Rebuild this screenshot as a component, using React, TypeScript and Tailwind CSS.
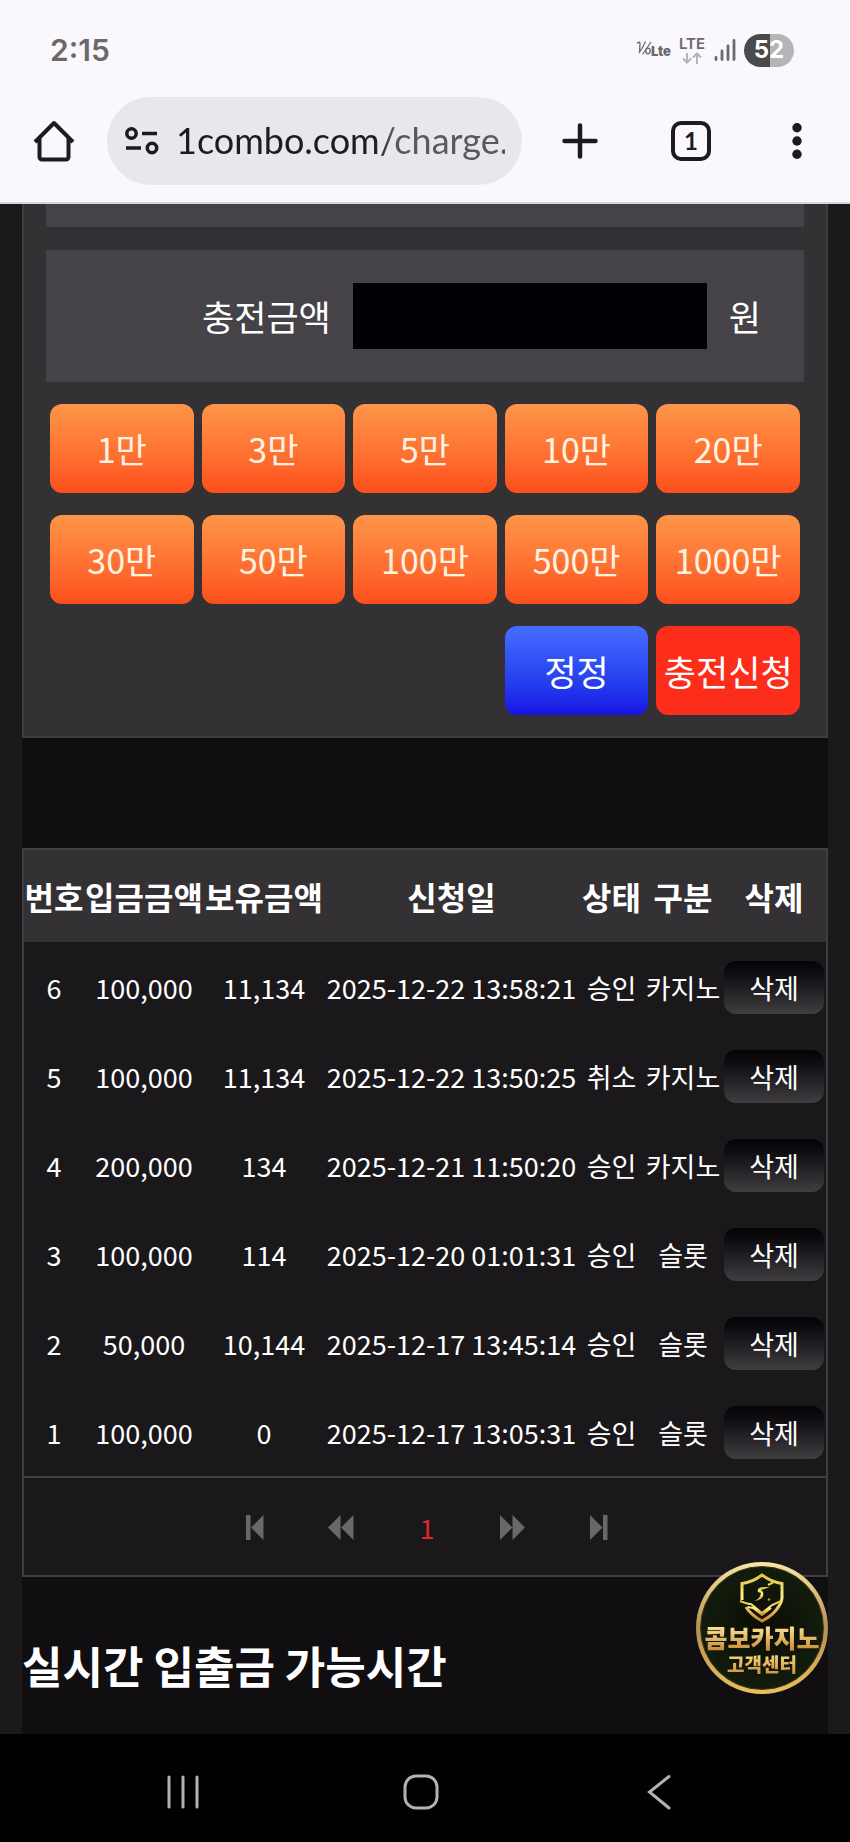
const amounts = ["1만", "3만", "5만", "10만", "20만", "30만", "50만", "100만", "500만", "1000만"];

const history = [
  { no: 6, deposit: "100,000", balance: "11,134", date: "2025-12-22 13:58:21", status: "승인", kind: "카지노" },
  { no: 5, deposit: "100,000", balance: "11,134", date: "2025-12-22 13:50:25", status: "취소", kind: "카지노" },
  { no: 4, deposit: "200,000", balance: "134", date: "2025-12-21 11:50:20", status: "승인", kind: "카지노" },
  { no: 3, deposit: "100,000", balance: "114", date: "2025-12-20 01:01:31", status: "승인", kind: "슬롯" },
  { no: 2, deposit: "50,000", balance: "10,144", date: "2025-12-17 13:45:14", status: "승인", kind: "슬롯" },
  { no: 1, deposit: "100,000", balance: "0", date: "2025-12-17 13:05:31", status: "승인", kind: "슬롯" },
];

function StatusBar() {
  return (
    <div className="flex h-20 items-center justify-between pl-[50px] pr-[56px] pt-5 font-['Inter',sans-serif] text-[#6a696c]">
      <span className="text-3xl font-semibold leading-8">2:15</span>
      <div className="flex items-center">
        <span className="flex items-baseline leading-5">
          <svg className="-mr-px h-4 w-4" viewBox="0 0 16 16" fill="none" stroke="currentColor" strokeWidth="1.3">
            <path d="M1 3.5q3-2.500 3 0L3.500 12Q6 9 9.500 1.500M15 2 6.500 14.500" />
            <ellipse cx="12" cy="11" rx="2.200" ry="2.800" />
          </svg>
          <span className="text-[13px] font-black">Lte</span>
        </span>
        <div className="ml-2 flex flex-col items-center">
          <span className="text-[15px] font-semibold leading-4">LTE</span>
          <svg className="h-3 w-5" viewBox="0 0 20 12" fill="none" stroke="#b5b4b7" strokeWidth="2">
            <path d="M5 1v9M1 6.500l4 4 4-4M15 12V2M11 5.500l4-4 4 4" />
          </svg>
        </div>
        <svg className="ml-2 h-6 w-[23px]" viewBox="0 0 23 24" fill="none" stroke="currentColor" strokeWidth="2.800" strokeLinecap="round">
          <path d="M3 19.500v2M9 13v8.500M15 8v13.500M21 2.500v19" />
        </svg>
        <span className="ml-2 flex h-[33px] w-[50px] items-center justify-center rounded-full bg-linear-to-r from-[#4a494c] from-52% to-[#b5b4b7] to-52% text-2xl font-bold text-white">
          52
        </span>
      </div>
    </div>
  );
}

function BrowserBar() {
  return (
    <div className="flex h-[124px] items-center border-b-2 border-[#d6d4d8] text-[#1c1b1f]">
      <button type="button" aria-label="홈" className="flex w-[107px] shrink-0 justify-center">
        <svg className="h-[42px] w-[42px]" viewBox="0 0 42 42" fill="none" stroke="currentColor" strokeWidth="4" strokeLinejoin="round">
          <path d="M2 22 21 3l19 19M6.500 18.500V37a2.500 2.500 0 0 0 2.500 2.500h24a2.500 2.500 0 0 0 2.500-2.500V18.500" />
        </svg>
      </button>
      <div className="flex h-[88px] min-w-0 flex-1 items-center rounded-full bg-[#e9e7eb] pl-[18px] pr-[17px]">
        <svg className="h-7 w-[34px] shrink-0" viewBox="0 0 34 28" fill="none" stroke="currentColor" strokeWidth="3.500">
          <circle cx="6.500" cy="6.500" r="4.700" />
          <circle cx="27" cy="21" r="4.700" />
          <path d="M17 6.500h15M1 21h15" />
        </svg>
        <input
          type="text"
          aria-label="주소창"
          readOnly
          value="1combo.com/charge."
          className="ml-[17px] w-full min-w-0 bg-linear-to-r from-[#1c1b1f] from-60% to-[#59585c] to-66% bg-clip-text pb-0.5 font-['Lato',sans-serif] text-4xl text-transparent outline-none"
        />
      </div>
      <button type="button" aria-label="새 탭" className="flex w-[116px] shrink-0 justify-center">
        <svg className="h-9 w-9" viewBox="0 0 36 36" stroke="currentColor" strokeWidth="4.500" strokeLinecap="round">
          <path d="M18 2.500v31M2.500 18h31" />
        </svg>
      </button>
      <button type="button" aria-label="열린 탭" className="flex w-[106px] shrink-0 justify-center">
        <span className="flex h-10 w-10 items-center justify-center rounded-[10px] border-4 border-current font-['Lato',sans-serif] text-2xl font-bold leading-6">
          1
        </span>
      </button>
      <button type="button" aria-label="메뉴" className="flex w-[106px] shrink-0 justify-center">
        <svg className="h-9 w-3" viewBox="0 0 12 36" fill="currentColor">
          <circle cx="6" cy="4.700" r="4.700" />
          <circle cx="6" cy="18" r="4.700" />
          <circle cx="6" cy="31.300" r="4.700" />
        </svg>
      </button>
    </div>
  );
}

function ChargeForm() {
  return (
    <form className="border-2 border-t-0 border-[#403e41] bg-[#333133] px-[22px] pb-[21px] text-[35px] leading-10">
      <div className="h-[23px] bg-[#454347]" />
      <div className="mt-[23px] flex h-[132px] items-center justify-end gap-[22px] bg-[#454347] pr-[43px]">
        <label htmlFor="amount" className="whitespace-nowrap">충전금액</label>
        <input id="amount" type="text" className="h-[66px] w-[354px] min-w-0 bg-[#020004] px-4 outline-none" />
        <span>원</span>
      </div>
      <div className="mt-[22px] grid grid-cols-5 gap-x-2 gap-y-[22px] px-1">
        {amounts.map((amount) => (
          <button
            key={amount}
            type="button"
            className="h-[89px] whitespace-nowrap rounded-xl bg-linear-to-b from-[#fd9548] to-[#fd4e1b] text-[34px] text-[#fff3e4]"
          >
            {amount}
          </button>
        ))}
        <button type="reset" className="col-start-4 h-[89px] whitespace-nowrap rounded-xl bg-linear-to-b from-[#486cff] to-[#1a0de4]">
          정정
        </button>
        <button type="submit" className="h-[89px] whitespace-nowrap rounded-xl bg-[#fc2d1b]">
          충전신청
        </button>
      </div>
    </form>
  );
}

function HistoryTable() {
  return (
    <table className="w-full table-fixed whitespace-nowrap text-center text-[27px] leading-9">
      <colgroup>
        <col className="w-[60px]" />
        <col className="w-[120px]" />
        <col className="w-[120px]" />
        <col className="w-[255px]" />
        <col className="w-[65px]" />
        <col className="w-[78px]" />
        <col className="w-[104px]" />
      </colgroup>
      <thead className="bg-[#333133] text-[32px] font-bold">
        <tr className="h-[92px]">
          <th>번호</th>
          <th>입금금액</th>
          <th>보유금액</th>
          <th>신청일</th>
          <th>상태</th>
          <th>구분</th>
          <th>삭제</th>
        </tr>
      </thead>
      <tbody>
        {history.map((row) => (
          <tr className="h-[89px] *:pt-0.5" key={row.no}>
            <td>{row.no}</td>
            <td>{row.deposit}</td>
            <td>{row.balance}</td>
            <td>{row.date}</td>
            <td>{row.status}</td>
            <td>{row.kind}</td>
            <td>
              <button
                type="button"
                className="mx-auto block h-[53px] w-[100px] rounded-xl bg-linear-to-b from-[#040305] to-[#403e41]"
              >
                삭제
              </button>
            </td>
          </tr>
        ))}
      </tbody>
    </table>
  );
}

function Pagination() {
  const item = "flex w-[86px] justify-center text-[#69676a]";

  return (
    <nav aria-label="페이지" className="flex h-[99px] items-center justify-center border-t-2 border-[#403e41] pl-1 pt-0.5">
      <a href="#first" aria-label="처음" className={item}>
        <svg className="h-[25px] w-[18px]" viewBox="0 0 18 25" fill="currentColor">
          <path d="M0 0h4.500v25H0zM17.500 0v25L5 12.500z" />
        </svg>
      </a>
      <a href="#prev" aria-label="이전" className={item}>
        <svg className="h-[25px] w-[26px]" viewBox="0 0 26 25" fill="currentColor">
          <path d="M12.500 0v25L0 12.500zM25.500 0v25L13 12.500z" />
        </svg>
      </a>
      <a href="#1" aria-current="page" className="flex w-[86px] justify-center text-[27px] leading-9 text-[#e0242c]">
        1
      </a>
      <a href="#next" aria-label="다음" className={item}>
        <svg className="h-[25px] w-[26px]" viewBox="0 0 26 25" fill="currentColor">
          <path d="M0 0v25l12.500-12.500zM12.500 0v25L25 12.500z" />
        </svg>
      </a>
      <a href="#last" aria-label="마지막" className={item}>
        <svg className="h-[25px] w-[18px]" viewBox="0 0 18 25" fill="currentColor">
          <path d="M0 0v25l12.500-12.500zM13 0h4.500v25H13z" />
        </svg>
      </a>
    </nav>
  );
}

// Floating shortcut to the customer centre
function SupportBadge() {
  return (
    <a
      href="#support"
      className="absolute bottom-10 right-0 h-[132px] w-[132px] rounded-full bg-linear-to-b from-[#f6e9a8] via-[#b58f4e] to-[#e8c25c] p-1"
    >
      <span className="flex h-full w-full flex-col items-center rounded-full border border-[#4a3413] bg-radial from-[#0b0c04] to-[#142412] pt-1.5">
        <svg className="h-[50px] w-[46px]" viewBox="0 0 46 50" fill="none" stroke="url(#gold)" strokeWidth="3" strokeLinejoin="miter">
          <defs>
            <linearGradient id="gold" x1="0" y1="0" x2="0" y2="1">
              <stop offset="0" stopColor="#e0c53e" />
              <stop offset="0.5" stopColor="#fff08a" />
              <stop offset="1" stopColor="#cf8a2c" />
            </linearGradient>
          </defs>
          <path d="M3 27V10.500Q13 9.500 23 2q10 7.500 20 8.500V25q0 4-3 8-5 9-17 15Q12 42 7 34" />
          <path d="M1 28q7 3 11 3l11 9 10-8 9-4M9 34l5 1 9 7 9-7" strokeWidth="2" />
          <path d="M26 14q-9 0-7 5l3 1q-1 6-7 8 11-1 9-9l-2-2 9-3z" fill="url(#gold)" stroke="none" />
          <path d="m29 27 2-1M29 12l6-3" strokeWidth="2" />
        </svg>
        <span className="whitespace-nowrap bg-linear-to-b from-[#fff0a0] to-[#c98a31] bg-clip-text text-[25px] font-black leading-7 text-transparent">
          콤보카지노
        </span>
        <span className="whitespace-nowrap bg-linear-to-b from-[#fbe38a] to-[#c98a31] bg-clip-text text-[19px] font-black leading-[26px] text-transparent">
          고객센터
        </span>
      </span>
    </a>
  );
}

function NavigationBar() {
  return (
    <nav aria-label="시스템" className="grid h-[108px] grid-cols-3 items-center bg-[#020003] pl-16 pr-[72px] pt-2 text-[#b3b1b4]">
      <button type="button" aria-label="최근 앱" className="flex justify-center">
        <svg className="h-9 w-9" viewBox="0 0 36 36" stroke="currentColor" strokeWidth="3" strokeLinecap="round">
          <path d="M4 3v30M18 3v30M32 3v30" />
        </svg>
      </button>
      <button type="button" aria-label="홈 화면" className="flex justify-center">
        <svg className="h-9 w-9" viewBox="0 0 36 36" fill="none" stroke="currentColor" strokeWidth="3">
          <rect x="2" y="2" width="32" height="32" rx="11" />
        </svg>
      </button>
      <button type="button" aria-label="뒤로" className="flex justify-center">
        <svg className="h-9 w-9" viewBox="0 0 36 36" fill="none" stroke="currentColor" strokeWidth="3" strokeLinecap="round">
          <path d="M28 2.500 8.500 18 28 34" />
        </svg>
      </button>
    </nav>
  );
}

export default function App() {
  return (
    <div className="min-h-screen bg-[#1b191b] font-['Noto_Sans_CJK_KR',sans-serif] text-white">
      <header className="bg-[#faf8fc]">
        <StatusBar />
        <BrowserBar />
      </header>
      <main className="relative mx-[22px] bg-[#100e11]">
        <ChargeForm />
        <section className="mt-[110px] border-2 border-[#403e41] bg-[#1a181b]">
          <HistoryTable />
          <Pagination />
        </section>
        <h2 className="pb-[39px] pt-[58px] text-[44px] font-bold leading-[60px]">실시간 입출금 가능시간</h2>
        <SupportBadge />
      </main>
      <NavigationBar />
    </div>
  );
}
